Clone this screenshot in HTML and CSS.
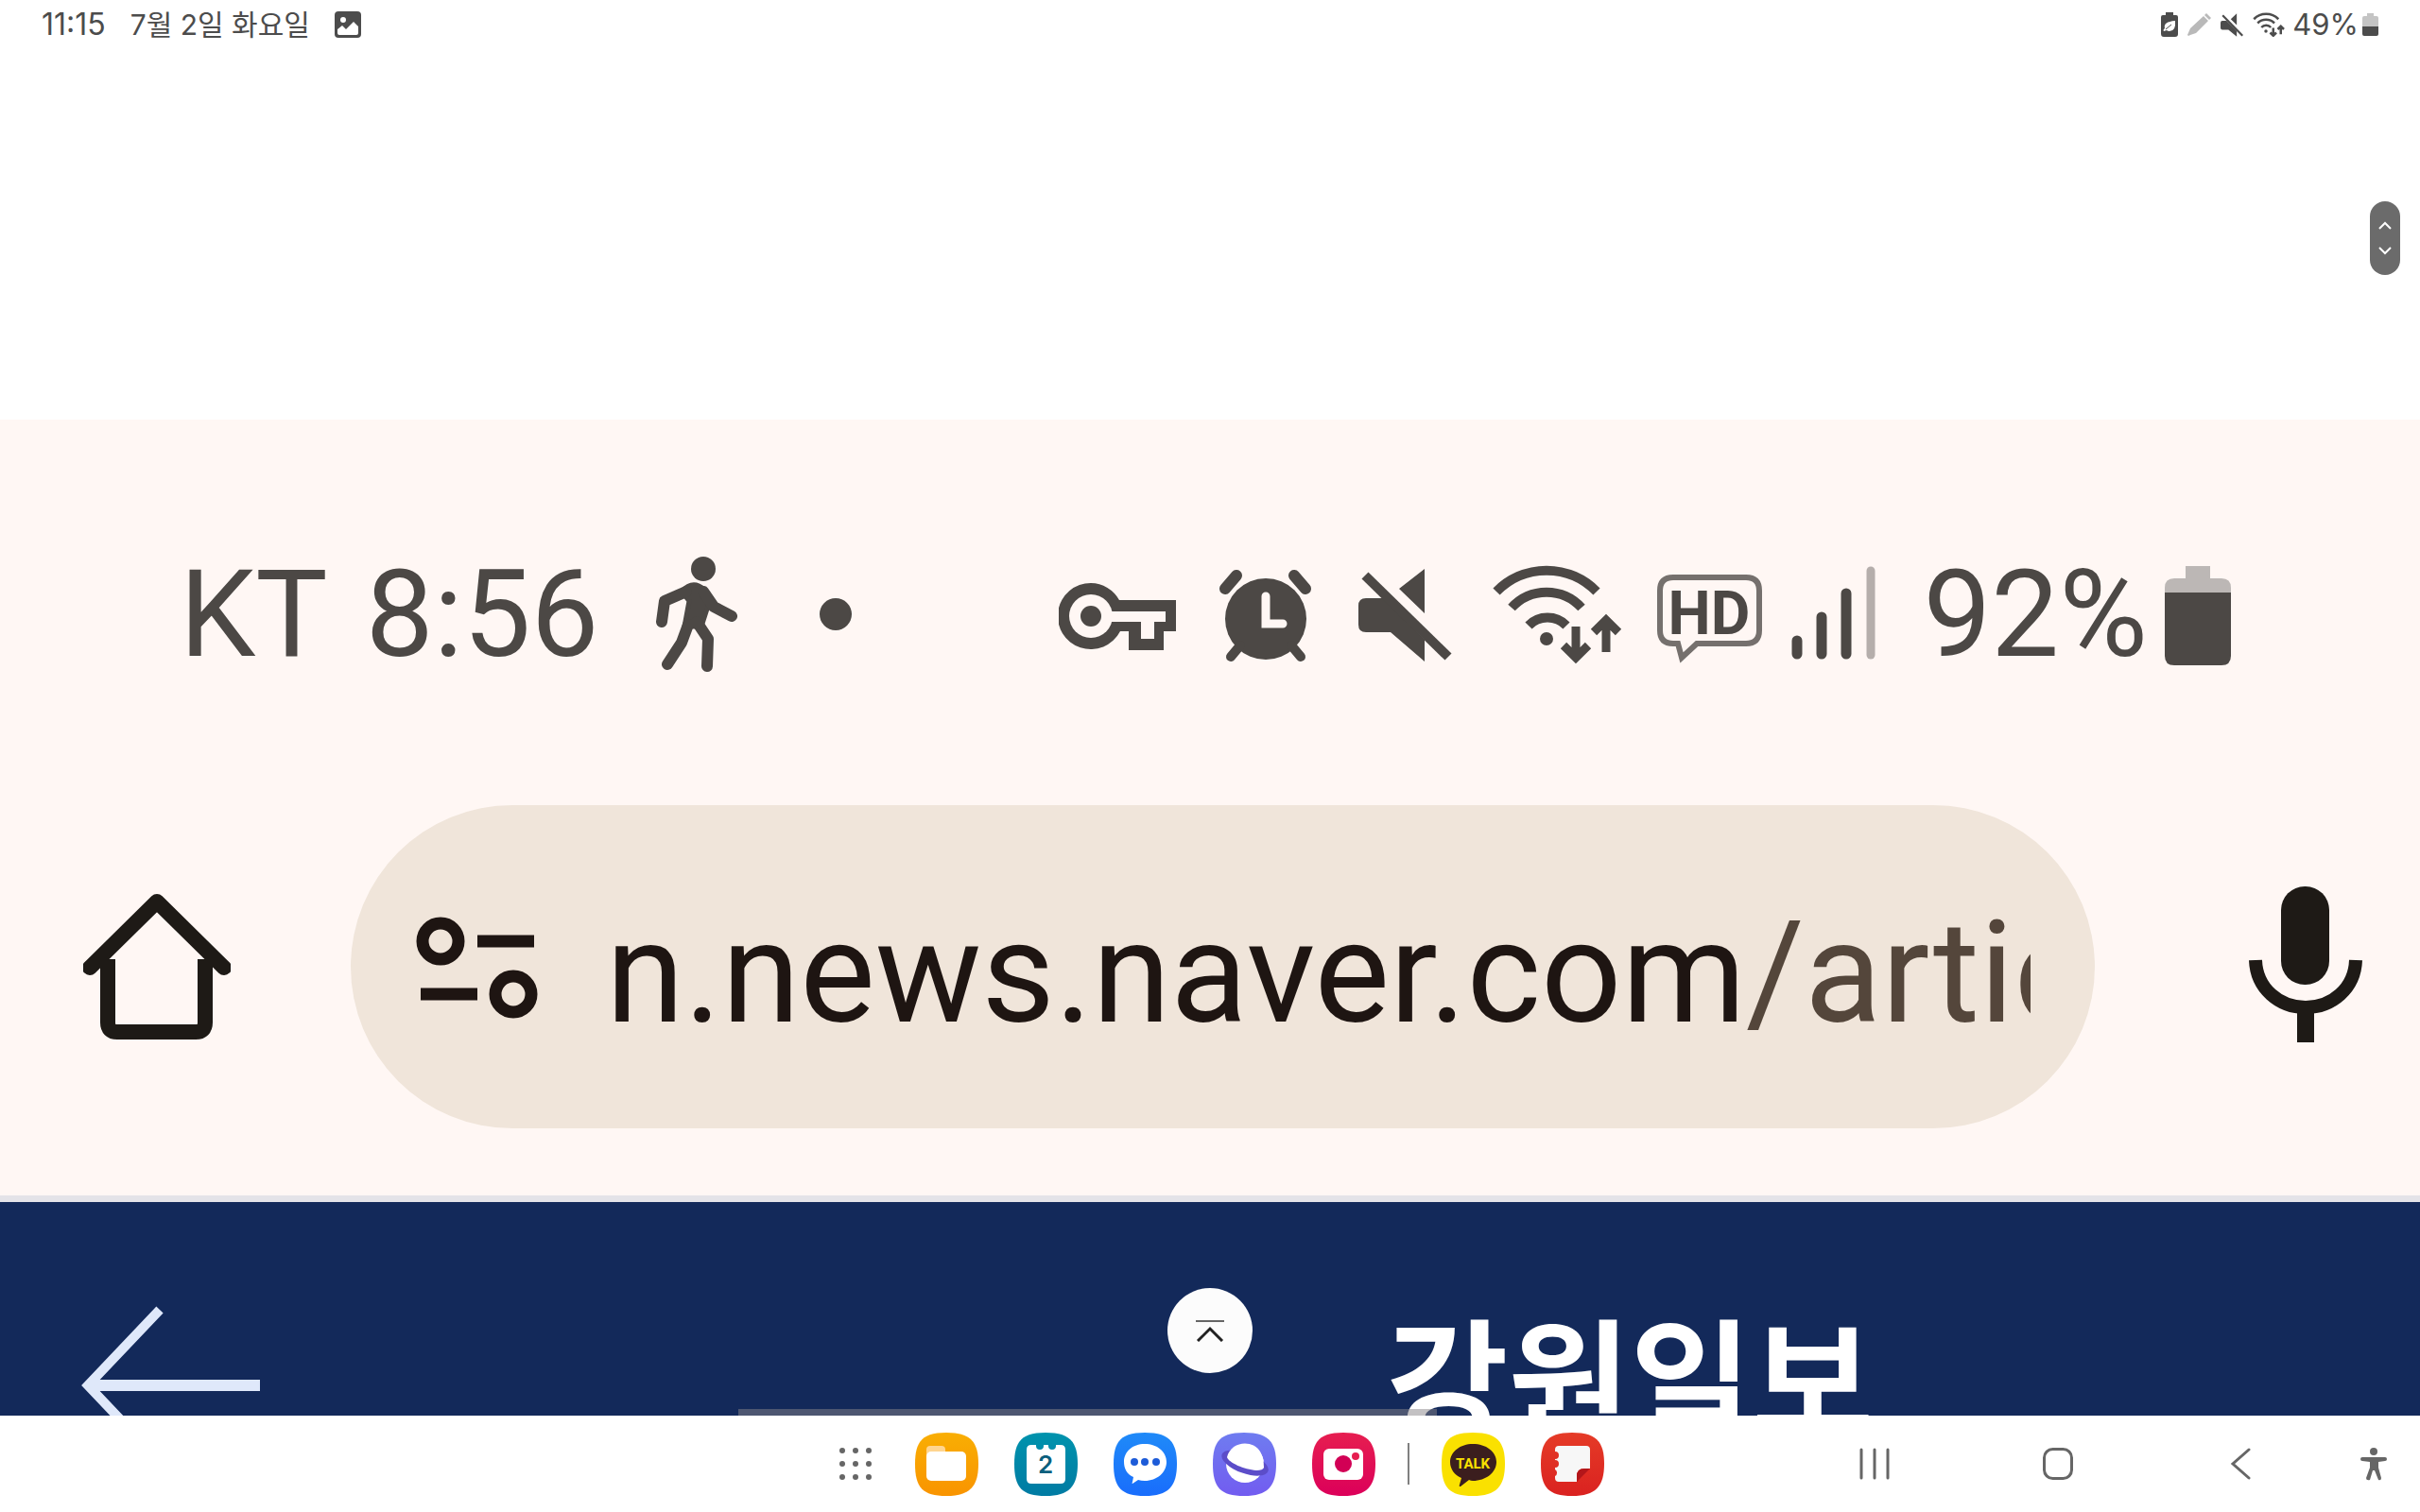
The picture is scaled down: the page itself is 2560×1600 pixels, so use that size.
FILE: index.html
```html
<!DOCTYPE html>
<html lang="ko">
<head>
    <meta charset="UTF-8">
    <meta name="viewport" content="width=device-width, initial-scale=1.0">
    <title>강원일보</title>
    <link rel="stylesheet" href="styles.css">
</head>
<body>
    <header class="status-bar">
        <div class="status-left">
            <span class="status-time">11:15</span>
            <span>7월 2일 화요일</span>
            <svg class="status-photo" width="28" height="28" viewBox="0 0 28 28">
                <rect width="28" height="28" rx="4" fill="#4c4c4c"/>
                <circle cx="9" cy="9" r="3" fill="#fff"/>
                <path d="M3 19 L8 15 L12 19 L20 11 L25 16 V23 Q25 25 23 25 H5 Q3 25 3 23 Z" fill="#fff"/>
            </svg>
        </div>
        <div class="status-right">
            <svg width="18" height="26" viewBox="0 0 18 26">
                <path d="M5 0 H13 V3 H16 Q18 3 18 5 V23 Q18 26 15 26 H3 Q0 26 0 23 V5 Q0 3 2 3 H5 Z" fill="#4c4c4c"/>
                <path d="M15 9 Q16 20 9 20 Q7 20 6 19 L3 20 Q2 19 3 18 L4 17 Q2 10 15 9 Z" fill="#fff"/>
                <path d="M5 18 L11 13" stroke="#4c4c4c"/>
            </svg>
            <svg width="25" height="25" viewBox="0 0 25 25" fill="#b9b9b9">
                <path d="M17 3 L22 8 L9 21 L3 23 L1 24 L0 23 L3 16 Z"/>
                <path d="M18 2 L20 0 L25 5 L23 7 Z"/>
            </svg>
            <svg width="24" height="25" viewBox="0 0 98 100">
                <path d="M8 32 H26 L70 76 V100 L34 70 H8 Q0 70 0 62 V40 Q0 32 8 32 Z M70 0 L44 24 L70 50 Z" fill="#4c4c4c"/>
                <path d="M9 8 L95 96" stroke="#4c4c4c" stroke-width="9"/>
            </svg>
            <svg width="34" height="26" viewBox="2 12 134 104" fill="none" stroke="#4c4c4c" stroke-width="10">
                <path d="M6 41 A73 73 0 0 1 110 41 M22 58 A50 50 0 0 1 93 58 M38 76 A27 27 0 0 1 78 76"/>
                <circle cx="57" cy="92" r="7" fill="#4c4c4c" stroke="none"/>
                <path d="M88 78 V110 M75 98 L88 111 L101 98 M120 105 V72 M107 84 L120 71 L133 84"/>
            </svg>
            <span class="status-percent">49%</span>
            <svg class="status-battery" width="17" height="25" viewBox="0 0 17 25">
                <path d="M5 0 H12 V3 H15 Q17 3 17 5 V14 H0 V5 Q0 3 2 3 H5 Z" fill="#c4c4c4"/>
                <path d="M0 14 H17 V22 Q17 24 15 24 H2 Q0 24 0 22 Z" fill="#4c4c4c"/>
            </svg>
        </div>
    </header>

    <main class="viewer">
        <section class="photo">
            <div class="phone-status">
                <div class="phone-status-left">
                    <span class="carrier">KT</span>
                    <span class="clock">8:56</span>
                    <!-- 걷는 사람 -->
                    <svg width="86" height="124" viewBox="0 0 86 124" fill="none" stroke="#4c4845" stroke-linecap="round" stroke-linejoin="round">
                        <circle cx="50" cy="14" r="13" fill="#4c4845" stroke="none"/>
                        <path d="M27 38 Q39 25 51 36 L56 50 L48 75 H30 L35 48 Z" fill="#4c4845" stroke-width="5"/>
                        <path d="M32 38 L9 48 L6 70 M50 38 L61 54 L80 64 M34 73 L27 92 L12 115 M43 70 L55 88 L54 117" stroke-width="12"/>
                    </svg>
                    <span class="more-dot"></span>
                </div>
                <div class="phone-status-right">
                    <svg width="140" height="130" viewBox="0 0 140 130">
                        <path d="M34 32 A35 35 0 0 1 64 50 H124 V83 H111 V103 H74 V83 H65 A35 35 0 1 1 34 32 Z" fill="#4c4845"/>
                        <circle cx="34" cy="67" r="23" fill="#fff7f4"/>
                        <path d="M50 62 H113 V73 H101 V91 H87 V73 H50 Z" fill="#fff7f4"/>
                        <circle cx="34" cy="67" r="11" fill="#4c4845"/>
                    </svg>
                    <svg width="117" height="130" viewBox="0 0 117 130" fill="none" stroke="#4c4845" stroke-linecap="round">
                        <path d="M6 38 L18 24 M79 24 L91 38" stroke-width="12"/>
                        <circle cx="49" cy="70" r="46" fill="#fff7f4" stroke="none"/>
                        <circle cx="49" cy="70" r="43" fill="#4c4845" stroke="none"/>
                        <path d="M12 110 L22 98 M86 110 L76 98" stroke-width="10"/>
                        <path d="M49 46 V75 H67" stroke="#fff7f4" stroke-width="9"/>
                    </svg>
                    <svg width="112" height="130" viewBox="0 0 112 130">
                        <path d="M8 48 H26 L70 92 V115 L34 84 H8 Q0 84 0 76 V56 Q0 48 8 48 Z M70 17 L43 38 L70 64 Z" fill="#4c4845"/>
                        <path d="M7 24 L95 110" stroke="#4c4845" stroke-width="10"/>
                    </svg>
                    <svg width="144" height="130" viewBox="0 0 144 130" fill="none" stroke="#4c4845" stroke-width="10">
                        <path d="M4 41 A74 74 0 0 1 110 41 M20 58 A50 50 0 0 1 94 58 M38 77 A28 28 0 0 1 78 77"/>
                        <circle cx="57" cy="91" r="7" fill="#4c4845" stroke="none"/>
                        <path d="M88 78 V110 M75 98 L88 111 L101 98 M120 105 V72 M107 84 L120 71 L133 84" stroke-width="9"/>
                    </svg>
                    <svg width="112" height="130" viewBox="0 0 112 130">
                        <path d="M17 26 H94 Q108 26 108 40 V82 Q108 96 94 96 H42 L26 111 L22 96 H17 Q3 96 3 82 V40 Q3 26 17 26 Z" fill="none" stroke="#75706d" stroke-width="6"/>
                        <text class="hd-text" x="55" y="86" text-anchor="middle">HD</text>
                    </svg>
                    <svg width="109" height="130" viewBox="0 0 109 130" stroke="#4c4845" stroke-width="11" stroke-linecap="round">
                        <path d="M6 93 V107 M32 68 V107 M58 43 V107"/>
                        <path d="M84 19 V108" stroke="#b5aeab" stroke-width="9"/>
                    </svg>
                    <span class="percent">92%</span>
                    <svg class="phone-battery" width="70" height="130" viewBox="0 0 70 130">
                        <path d="M22 14 H48 V27 H60 Q70 27 70 37 V44 H0 V37 Q0 27 10 27 H22 Z" fill="#bcb7b5"/>
                        <path d="M0 42 H70 V109 Q70 119 60 119 H10 Q0 119 0 109 Z" fill="#4c4845"/>
                    </svg>
                </div>
            </div>

            <div class="toolbar">
                <button class="icon-button" aria-label="홈">
                    <svg width="156" height="156" viewBox="0 0 156 156" fill="none" stroke="#1e1a16" stroke-width="16" stroke-linejoin="round">
                        <path d="M7 79 L78 9 L149 79" stroke-linecap="round"/>
                        <path d="M26 70 V137 Q26 147 36 147 H119 Q129 147 129 137 V70"/>
                    </svg>
                </button>
                <div class="address">
                    <svg width="132" height="112" viewBox="0 0 132 112" fill="none" stroke="#1e1512" stroke-width="13">
                        <circle cx="27" cy="29" r="19"/>
                        <path d="M66 29 H126 M6 85 H66"/>
                        <circle cx="104" cy="85" r="19"/>
                    </svg>
                    <input class="address-input" type="text" aria-label="주소" value="n.news.naver.com/article">
                </div>
                <button class="icon-button" aria-label="음성 검색">
                    <svg width="120" height="171" viewBox="0 0 120 171" fill="none" stroke="#1e1a16">
                        <rect x="34" y="0" width="51" height="104" rx="25" fill="#1e1a16" stroke="none"/>
                        <path d="M7 78 C8 108 32 128 60 128 S112 108 113 78" stroke-width="14"/>
                        <path d="M60 128 V165" stroke-width="18"/>
                    </svg>
                </button>
            </div>

            <div class="press-header">
                <button class="icon-button" aria-label="뒤로">
                    <svg width="190" height="180" viewBox="0 0 190 180" fill="none" stroke="#dfe8fa">
                        <path d="M6 90 H189" stroke-width="12"/>
                        <path d="M83 10 L7 90 L83 170" stroke-width="10"/>
                    </svg>
                </button>
                <h1 class="press-name">강원일보</h1>
            </div>
        </section>

        <div class="scroll-handle">
            <svg width="14" height="36" viewBox="0 0 14 36" fill="none" stroke="#fff" stroke-width="2">
                <path d="M1 8 L7 2 L13 8 M1 28 L7 34 L13 28"/>
            </svg>
        </div>
        <button class="go-top" aria-label="맨 위로">
            <svg width="34" height="24" viewBox="0 0 34 24" fill="none" stroke="#222" stroke-width="3">
                <path d="M2 2 H32" stroke="#666" stroke-width="2"/>
                <path d="M4 23 L17 10 L30 23"/>
            </svg>
        </button>
        <div class="scroll-track"></div>
    </main>

    <nav class="taskbar">
        <div class="dock">
            <button class="apps-button" aria-label="앱스">
                <svg width="34" height="34" viewBox="0 0 34 34" fill="#666">
                    <circle cx="3" cy="3" r="3"/><circle cx="17" cy="3" r="3"/><circle cx="31" cy="3" r="3"/>
                    <circle cx="3" cy="17" r="3"/><circle cx="17" cy="17" r="3"/><circle cx="31" cy="17" r="3"/>
                    <circle cx="3" cy="31" r="3"/><circle cx="17" cy="31" r="3"/><circle cx="31" cy="31" r="3"/>
                </svg>
            </button>
            <button class="app" aria-label="내 파일">
                <svg viewBox="0 0 67 67">
                    <linearGradient id="files" x2="0" y2="1"><stop stop-color="#f9ae03"/><stop offset="1" stop-color="#f99400"/></linearGradient>
                    <path d="M33 0 C58 0 67 9 67 33 S58 67 33 67 0 58 0 33 9 0 33 0" fill="url(#files)"/>
                    <path d="M12 30 V18 Q12 14 16 14 H28 Q32 14 32 18 V30 Z" fill="#ffd58f"/>
                    <rect x="12" y="20" width="42" height="31" rx="5" fill="#fff"/>
                </svg>
            </button>
            <button class="app" aria-label="캘린더">
                <svg viewBox="0 0 67 67">
                    <linearGradient id="calendar" x2="0" y2="1"><stop stop-color="#0093ad"/><stop offset="1" stop-color="#007ba3"/></linearGradient>
                    <path d="M33 0 C58 0 67 9 67 33 S58 67 33 67 0 58 0 33 9 0 33 0" fill="url(#calendar)"/>
                    <path d="M18 13 H23 V14 A4 4 0 0 0 31 14 V13 H36 V14 A4 4 0 0 0 44 14 V13 H49 Q54 13 54 18 V49 Q54 54 49 54 H18 Q13 54 13 49 V18 Q13 13 18 13 Z" fill="#fff"/>
                    <text class="calendar-day" x="33" y="43" text-anchor="middle">2</text>
                </svg>
            </button>
            <button class="app" aria-label="메시지">
                <svg viewBox="0 0 67 67">
                    <linearGradient id="messages" x2="0" y2="1"><stop stop-color="#1f8af8"/><stop offset="1" stop-color="#196dfc"/></linearGradient>
                    <path d="M33 0 C58 0 67 9 67 33 S58 67 33 67 0 58 0 33 9 0 33 0" fill="url(#messages)"/>
                    <path d="M33 12 C46 12 56 20 56 31 S46 51 33 51 Q29 51 26 50 L20 54 Q19 54 20 52 L21 47 C14 44 11 38 11 31 C11 20 20 12 33 12 Z" fill="#fff"/>
                    <g fill="#1d5bd8"><circle cx="22" cy="31" r="4"/><circle cx="33" cy="31" r="4"/><circle cx="45" cy="31" r="4"/></g>
                </svg>
            </button>
            <button class="app" aria-label="인터넷">
                <svg viewBox="0 0 67 67">
                    <linearGradient id="internet" x2="0" y2="1"><stop stop-color="#6f7cf0"/><stop offset="1" stop-color="#725cf0"/></linearGradient>
                    <path d="M33 0 C58 0 67 9 67 33 S58 67 33 67 0 58 0 33 9 0 33 0" fill="url(#internet)"/>
                    <circle cx="34" cy="33" r="20" fill="#fff"/>
                    <ellipse cx="34" cy="32" rx="26" ry="11" fill="#5c4dc9" transform="rotate(20 34 32)"/>
                    <path d="M15 26 C19 9 42 7 50 20 Q54 27 54 37 Q53 40 46 40 C33 39 17 32 15 26 Z" fill="#fff"/>
                </svg>
            </button>
            <button class="app" aria-label="카메라">
                <svg viewBox="0 0 67 67">
                    <linearGradient id="camera" x2="0" y2="1"><stop stop-color="#e61e50"/><stop offset="1" stop-color="#dc005a"/></linearGradient>
                    <path d="M33 0 C58 0 67 9 67 33 S58 67 33 67 0 58 0 33 9 0 33 0" fill="url(#camera)"/>
                    <rect x="12" y="17" width="42" height="33" rx="6" fill="#fff"/>
                    <circle cx="33" cy="33" r="9" fill="#d20055"/>
                    <circle cx="46" cy="25" r="4" fill="#e61e50"/>
                </svg>
            </button>
            <span class="dock-divider"></span>
            <button class="app" aria-label="카카오톡">
                <svg viewBox="0 0 67 67">
                    <path d="M33 0 C58 0 67 9 67 33 S58 67 33 67 0 58 0 33 9 0 33 0" fill="#fae100"/>
                    <path d="M33 12 C47 12 58 20 58 31 S47 51 33 51 Q31 51 29 50 L20 57 Q18 57 19 55 L21 48 C14 45 9 39 9 31 C9 20 20 12 33 12 Z" fill="#3b1e1e"/>
                    <text class="talk-text" x="33" y="38" text-anchor="middle">TALK</text>
                </svg>
            </button>
            <button class="app" aria-label="노트">
                <svg viewBox="0 0 67 67">
                    <linearGradient id="notes" x2="0" y2="1"><stop stop-color="#e53b27"/><stop offset="1" stop-color="#da2220"/></linearGradient>
                    <path d="M33 0 C58 0 67 9 67 33 S58 67 33 67 0 58 0 33 9 0 33 0" fill="url(#notes)"/>
                    <path d="M19 14 H48 Q52 14 52 18 V38 H46 Q38 38 38 46 V52 H19 Q15 52 15 48 V46 A4 4 0 0 0 15 39 V37 A4 4 0 0 0 15 29 V28 A4 4 0 0 0 15 20 V18 Q15 14 19 14 Z" fill="#f7f7f7"/>
                    <path d="M38 52 V46 Q38 38 46 38 H52 Z" fill="#b3161a"/>
                </svg>
            </button>
        </div>

        <div class="nav-keys">
            <button class="icon-button" aria-label="최근 앱">
                <svg width="32" height="34" viewBox="0 0 32 34" fill="none" stroke="#666" stroke-width="3" stroke-linecap="round">
                    <path d="M2 2 V32 M16 2 V32 M30 2 V32"/>
                </svg>
            </button>
            <button class="icon-button" aria-label="홈 화면">
                <svg width="32" height="34" viewBox="0 0 32 34" fill="none" stroke="#666" stroke-width="3">
                    <rect x="1.5" y="1.5" width="29" height="31" rx="9"/>
                </svg>
            </button>
            <button class="icon-button" aria-label="이전">
                <svg width="32" height="34" viewBox="0 0 32 34" fill="none" stroke="#666" stroke-width="3" stroke-linecap="round">
                    <path d="M24 2 L7 17 L24 32" />
                </svg>
            </button>
            <button class="icon-button accessibility" aria-label="접근성">
                <svg width="32" height="36" viewBox="0 0 32 36" fill="#666">
                    <circle cx="16" cy="5" r="4"/>
                    <path d="M4 11 H28 Q30 11 30 13 T28 15 L21 16 V22 L24 33 Q24 36 21 35 L17 25 H15 L12 35 Q8 36 8 33 L12 22 V16 L4 15 Q2 15 2 13 T4 11 Z"/>
                </svg>
            </button>
        </div>
    </nav>
</body>
</html>
```
FILE: styles.css
```css
* {
    box-sizing: border-box;
}
body {
    margin: 0;
    height: 100vh;
    display: flex;
    flex-direction: column;
    overflow: hidden;
    background: #fff;
    color: #4c4c4c;
    font-family: Inter, 'Noto Sans CJK KR', sans-serif;
}
svg {
    display: block;
    flex: none;
}
button {
    padding: 0;
    border: none;
    background: none;
    cursor: pointer;
}

/* 상단 상태 표시줄 */
.status-bar {
    display: flex;
    justify-content: space-between;
    align-items: center;
    height: 52px;
    padding: 0 44px;
    font-size: 30px;
    line-height: 52px;
}
.status-left {
    display: flex;
    align-items: center;
    gap: 26px;
}
.status-time {
    font-size: 32px;
}
.status-right {
    display: flex;
    align-items: center;
    gap: 10px;
}
.status-percent {
    margin-left: -2px;
    font-size: 31px;
}
.status-battery {
    margin-left: -6px;
}

/* 사진 뷰어 */
.viewer {
    position: relative;
    flex: 1;
    min-height: 0;
    overflow: hidden;
    padding-top: 392px;
}
.photo {
    background: #fff7f4;
    padding-top: 122px;
    font-family: Roboto, 'Noto Sans CJK KR', sans-serif;
}
.phone-status {
    display: flex;
    justify-content: space-between;
    align-items: center;
    height: 168px;
    padding: 0 200px 0 190px;
    color: #4c4845;
    font-size: 128px;
    line-height: 168px;
}
.phone-status-left,
.phone-status-right {
    display: flex;
    align-items: center;
}
.phone-status-right {
    gap: 30px;
}
.clock {
    margin: 0 60px 0 40px;
}
.more-dot {
    width: 34px;
    height: 34px;
    margin-left: 87px;
    border-radius: 50%;
    background: #4c4845;
}
.hd-text {
    font-size: 64px;
    font-weight: 700;
    fill: #4c4845;
}
.phone-battery {
    margin-left: -12px;
}

.toolbar {
    display: flex;
    align-items: center;
    margin-top: 118px;
    padding: 0 61px 0 88px;
}
.address {
    display: flex;
    align-items: center;
    flex: 1;
    min-width: 0;
    gap: 70px;
    height: 342px;
    margin: 0 163px 0 127px;
    padding: 0 68px;
    border-radius: 171px;
    background: #f0e5da;
}
.address-input {
    flex: 1;
    min-width: 0;
    height: 200px;
    padding: 14px 0 0;
    border: none;
    outline: none;
    font-family: Roboto, sans-serif;
    font-size: 150px;
    color: transparent;
    /* 도메인은 진하게, 경로는 연하게 */
    background: linear-gradient(90deg, #1e1512 1204px, #54463b 1204px);
    background-clip: text;
    -webkit-background-clip: text;
}

.press-header {
    display: flex;
    justify-content: space-between;
    align-items: center;
    height: 394px;
    margin-top: 71px;
    padding: 0 578px 0 86px;
    border-top: 7px solid #e4e3e8;
    background: #13295a;
}
.press-name {
    margin: 0;
    padding-bottom: 26px;
    color: #fff;
    font-family: 'Noto Sans CJK KR', sans-serif;
    font-size: 140px;
    font-weight: 700;
    line-height: 160px;
}

.scroll-handle {
    position: absolute;
    top: 161px;
    right: 21px;
    display: flex;
    align-items: center;
    justify-content: center;
    width: 32px;
    height: 78px;
    border-radius: 16px;
    background: #6b6b6b;
}
.go-top {
    position: absolute;
    bottom: 45px;
    left: 50%;
    display: flex;
    align-items: center;
    justify-content: center;
    width: 90px;
    height: 90px;
    margin-left: -45px;
    border-radius: 50%;
    background: #fcfcfc;
}
.scroll-track {
    position: absolute;
    bottom: 0;
    left: 781px;
    right: 1040px;
    height: 7px;
    background: rgba(136, 132, 136, 0.5);
}

/* 하단 작업 표시줄 */
.taskbar {
    display: grid;
    grid-template-columns: 1fr auto 1fr;
    align-items: center;
    height: 102px;
    background: #fff;
}
.dock {
    grid-column: 2;
    display: flex;
    align-items: center;
    gap: 38px;
    padding-left: 24px;
}
.apps-button {
    margin-right: 8px;
}
.app {
    width: 67px;
    height: 67px;
}
.dock-divider {
    width: 2px;
    height: 44px;
    margin: 0 -4px;
    background: #808080;
}
.calendar-day {
    font-family: Inter, sans-serif;
    font-size: 26px;
    font-weight: 600;
    fill: #0b5f7d;
}
.talk-text {
    font-family: Roboto, sans-serif;
    font-size: 15px;
    font-weight: 700;
    fill: #fae100;
}
.nav-keys {
    display: flex;
    align-items: center;
    justify-content: flex-end;
    gap: 162px;
    padding-right: 33px;
}
.accessibility {
    margin-left: -54px;
}
```
